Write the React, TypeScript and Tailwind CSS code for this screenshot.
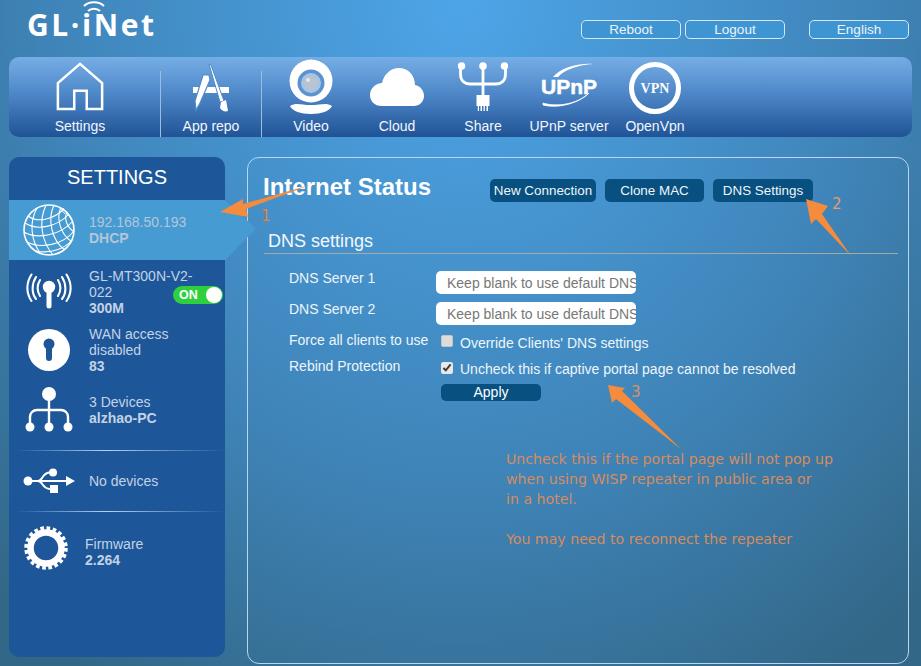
const labelFont = "font-['Liberation_Sans',Arial,sans-serif]";

function HouseIcon() {
  return (
    <svg width="50" height="50" viewBox="0 0 52 52" fill="none" stroke="#fff" strokeWidth="2.6" strokeLinejoin="miter">
      <path d="M26 2 L3 22 L3 49 L20 49 L20 30 L33 30 L33 49 L49 49 L49 22 Z" />
    </svg>
  );
}

function AppRepoIcon() {
  return (
    <svg width="42" height="50" viewBox="0 0 42 50" fill="#fff">
      <path d="M3 25 H39 V31 H3 Z" />
      <path d="M13 13 L19 13 L20 18 L10 41 L6 48 L5 39 Z" stroke="#5089c8" strokeWidth="1.2" />
      <path d="M19 2 L21 3 L34 39 L30 40 Z" stroke="#5089c8" strokeWidth="1" />
      <path d="M31 40 L36 38 L38 49 C35 50 32 49 30 46 Z" />
    </svg>
  );
}

function WebcamIcon() {
  return (
    <svg width="46" height="56" viewBox="0 0 46 56">
      <circle cx="23" cy="22" r="21.5" fill="#fff" />
      <circle cx="23" cy="24" r="13.5" fill="#5b93d2" />
      <circle cx="23" cy="24" r="10" fill="#a9c4e2" />
      <circle cx="23" cy="24" r="6.5" fill="#b9c4cf" />
      <circle cx="20" cy="21" r="2" fill="#e3e9ef" />
      <path d="M2 47 C8 43 13 46 23 46 C33 46 38 43 44 47 C42 52 33 55 23 55 C13 55 4 52 2 47 Z" fill="#fff" />
    </svg>
  );
}

function CloudIcon() {
  return (
    <svg width="54" height="40" viewBox="0 0 54 40" fill="#fff">
      <path d="M12 39 C4 39 0 34 0 28 C0 21 6 16 12 16 C14 7 21 1 29 1 C38 1 45 8 45 18 C50 19 54 23 54 29 C54 35 49 39 44 39 Z" />
    </svg>
  );
}

function ShareIcon() {
  return (
    <svg width="50" height="50" viewBox="0 0 50 50">
      <g fill="none" stroke="#fff" strokeWidth="2.8">
        <path d="M25 4 V34" />
        <path d="M2.5 4 V12 C2.5 19 7 22 12 22 H38 C43 22 47.5 19 47.5 12 V4" />
      </g>
      <g fill="#fff">
        <circle cx="3.5" cy="4" r="3.8" />
        <circle cx="25" cy="4" r="3.8" />
        <circle cx="46.5" cy="4" r="3.8" />
        <path d="M18.5 33 H31.5 V44 H30 V49 H28.5 V44 H26.8 V49 H25.5 V44 H24 V49 H22.5 V44 H21 V49 H19.8 V44 H18.5 Z" />
      </g>
    </svg>
  );
}

function UpnpIcon() {
  return (
    <svg width="56" height="46" viewBox="0 0 56 46">
      <path d="M12 14 C20 5 36 0 52 1 C38 2 24 6 17 14 Z" fill="#fff" />
      <path d="M2 40 C14 44 36 42 48 30 C38 40 18 46 2 42 Z" fill="#fff" stroke="#fff" strokeWidth="0.8" />
      <text x="28" y="31" textAnchor="middle" fill="#fff" stroke="#fff" strokeWidth="0.5" fontFamily="'Liberation Sans',Arial,sans-serif" fontWeight="700" fontSize="21">UPnP</text>
    </svg>
  );
}

function VpnIcon() {
  return (
    <svg width="54" height="54" viewBox="0 0 54 54">
      <circle cx="27" cy="27" r="23.5" fill="none" stroke="#fff" strokeWidth="5" />
      <text x="27" y="32" textAnchor="middle" fill="#fff" fontFamily="'Liberation Serif',serif" fontWeight="700" fontSize="14">VPN</text>
    </svg>
  );
}

function GlobeIcon() {
  return (
    <svg width="52" height="52" viewBox="0 0 52 52" fill="none" stroke="#fff" strokeWidth="1.1">
      <circle cx="26" cy="26" r="25" strokeWidth="1.6" />
      <path d="M5 12 C14 19 30 16 41 5" />
      <path d="M2 19 C14 27 34 23 46 10" />
      <path d="M1 28 C14 36 38 31 50 17" />
      <path d="M4 38 C18 45 40 41 51 27" />
      <path d="M13 47 C26 50 42 45 49 36" />
      <path d="M14 4 C6 18 8 36 17 49" />
      <path d="M23 1 C15 18 19 38 30 51" />
      <path d="M31 1 C24 16 29 37 42 46" />
      <path d="M38 3 C33 14 37 30 49 38" />
      <path d="M44 8 C41 14 43 22 51 28" />
      <path d="M36 3 L42 10 M40 4 L46 12 M43 7 L48 15" strokeWidth="0.9" />
    </svg>
  );
}

function WirelessIcon() {
  return (
    <svg width="46" height="36" viewBox="0 0 46 36" fill="none" stroke="#fff" strokeWidth="2.1" strokeLinecap="round">
      <circle cx="23" cy="14" r="6.2" fill="#fff" stroke="none" />
      <path d="M23 16 V33" strokeWidth="5" />
      <path d="M14 7 C11 12 11 18 14 23" />
      <path d="M10 4 C5.5 11 5.5 20 10 26" />
      <path d="M5.5 1.5 C0 10 0 20 5.5 28" />
      <path d="M32 7 C35 12 35 18 32 23" />
      <path d="M36 4 C40.5 11 40.5 20 36 26" />
      <path d="M40.5 1.5 C46 10 46 20 40.5 28" />
    </svg>
  );
}

function KeyholeIcon() {
  return (
    <svg width="42" height="42" viewBox="0 0 42 42">
      <circle cx="21" cy="21" r="21" fill="#fff" />
      <circle cx="21" cy="15" r="5.5" fill="#1d5799" />
      <rect x="18" y="15" width="6" height="17" rx="3" fill="#1d5799" />
    </svg>
  );
}

function TreeIcon() {
  return (
    <svg width="48" height="46" viewBox="0 0 48 46">
      <g fill="none" stroke="#fff" strokeWidth="2.4">
        <path d="M24 8 V38" />
        <path d="M5 38 V30 C5 26 8 23 12 23 H36 C40 23 43 26 43 30 V38" />
      </g>
      <g fill="#fff">
        <circle cx="24" cy="7" r="7" />
        <circle cx="5" cy="40" r="4.5" />
        <circle cx="24" cy="40" r="4.5" />
        <circle cx="43" cy="40" r="4.5" />
      </g>
    </svg>
  );
}

function UsbIcon() {
  return (
    <svg width="52" height="26" viewBox="0 0 52 26" fill="#fff">
      <circle cx="5" cy="13" r="4.5" />
      <path d="M5 12 H43 V14 H5 Z" />
      <path d="M43 8 L52 13 L43 18 Z" />
      <circle cx="30" cy="4.5" r="4" />
      <rect x="27" y="17" width="8" height="8" />
      <path d="M15 13 C20 13 19 4.5 27 4.5 M15 13 C20 13 19 21 27 21" fill="none" stroke="#fff" strokeWidth="2" />
    </svg>
  );
}

function GearIcon() {
  return (
    <svg width="44" height="44" viewBox="0 0 44 44" fill="none" stroke="#fff">
      <circle cx="22" cy="22" r="15.5" strokeWidth="6.5" />
      <circle cx="22" cy="22" r="19.5" strokeWidth="4.5" strokeDasharray="3.6 2.52" />
    </svg>
  );
}

function NavItem({ label, children, width = "w-[86px]" }: { label: string; children: React.ReactNode; width?: string }) {
  return (
    <div className={`${width} h-full flex flex-col items-center shrink-0`}>
      <div className="h-[60px] flex items-end justify-center">{children}</div>
      <span className="text-[14px] leading-4 text-[#f1f6fc] mt-[1px] whitespace-nowrap">{label}</span>
    </div>
  );
}

function TopButton({ label, className = "" }: { label: string; className?: string }) {
  return (
    <button className={`w-[100px] h-[19px] rounded-[5px] border border-[#d3e9f8] bg-[#3f95d1] text-[13.5px] leading-[17px] text-[#eaf4fb] ${className}`}>
      {label}
    </button>
  );
}

function TabButton({ label, width }: { label: string; width: string }) {
  return (
    <button className={`${width} h-[23px] rounded-[5px] bg-[#07507f] text-[13.4px] leading-[23px] text-[#eef5fa]`}>
      {label}
    </button>
  );
}

function SideRule() {
  return <div className="h-px bg-[linear-gradient(to_right,transparent_3%,#b5d2f2_45%,transparent_100%)]" />;
}

function Annotations() {
  return (
    <svg className="absolute inset-0 pointer-events-none" width="921" height="666" viewBox="0 0 921 666">
      <g fill="#f58b3c">
        <path d="M220 212 L243 199 L243 204 L310 185 L246 209 L248 217 Z" />
        <path d="M806 199 L828 206 L822 214 L851 256 L816 219 L811 224 Z" />
        <path d="M608 385 L625 388 L622 391 L681 449 L616 399 L612 403 Z" />
      </g>
    </svg>
  );
}

export default function App() {
  return (
    <div className={`relative w-[921px] h-[666px] overflow-hidden ${labelFont} bg-[radial-gradient(ellipse_75%_120%_at_50%_0%,#4da5e8_0%,#3f84b8_60%,#326787_100%)]`}>
      {/* top bar */}
      <header className="h-[57px] flex justify-between">
        <div className="relative ml-[27px] pt-[7px]">
          <span className="font-['Open_Sans',sans-serif] font-bold text-[30px] leading-[36px] tracking-[2.6px] text-white whitespace-nowrap">
            GL·iNet
          </span>
          <svg className="absolute left-[56px] top-[1px]" width="22" height="13" viewBox="0 0 22 13" fill="none" stroke="#fff" strokeWidth="2">
            <path d="M1 5 C6 0 16 0 21 5" />
            <path d="M5 10 C8 7 14 7 17 10" />
          </svg>
        </div>
        <div className="flex pt-[20px] pr-[12px]">
          <TopButton label="Reboot" />
          <TopButton label="Logout" className="ml-[4px]" />
          <TopButton label="English" className="ml-[24px]" />
        </div>
      </header>

      {/* app nav */}
      <nav className="mx-[9px] h-[80px] rounded-[10px] flex bg-[linear-gradient(to_bottom,#75aee5_0%,#4f88c8_45%,#1f5396_100%)]">
        <NavItem label="Settings" width="w-[142px]"><div className="pb-[5px]"><HouseIcon /></div></NavItem>
        <div className="w-px mt-[14px] bg-[#9dbde0] ml-[9px] shrink-0" />
        <NavItem label="App repo" width="w-[100px]"><div className="pb-[5px]"><AppRepoIcon /></div></NavItem>
        <div className="w-px mt-[14px] bg-[#9dbde0] shrink-0" />
        <div className="ml-[6px] flex">
          <NavItem label="Video"><div className="pb-[2px]"><WebcamIcon /></div></NavItem>
          <NavItem label="Cloud"><div className="pb-[10px]"><CloudIcon /></div></NavItem>
          <NavItem label="Share"><div className="pb-[5px]"><ShareIcon /></div></NavItem>
          <NavItem label="UPnP server"><div className="pb-[8px]"><UpnpIcon /></div></NavItem>
          <NavItem label="OpenVpn"><div className="pb-[2px]"><VpnIcon /></div></NavItem>
        </div>
      </nav>

      <div className="flex mt-[20px] ml-[9px]">
        {/* sidebar */}
        <aside className="w-[216px] h-[500px] rounded-[10px] bg-[#1d5799] shrink-0 text-[14px] leading-4 text-[#c3d2e6]">
          <h2 className="h-[43px] text-center text-[20px] leading-[41px] text-white">SETTINGS</h2>

          <div className="relative h-[60px] bg-[#469bd2] flex items-center text-[#b4c6d8]">
            <div className="absolute left-[216px] top-0 w-[31px] h-[60px] bg-[#469bd2] [clip-path:polygon(0_0,100%_48%,0_100%)]" />
            <div className="w-[80px] pl-[14px] shrink-0 flex"><GlobeIcon /></div>
            <div>
              <div>192.168.50.193</div>
              <div className="font-bold">DHCP</div>
            </div>
          </div>

          <div className="h-[62px] flex items-center">
            <div className="w-[80px] pl-[17px] shrink-0 flex"><WirelessIcon /></div>
            <div className="w-[84px] shrink-0 pt-[1px]">
              <div className="whitespace-nowrap">GL-MT300N-V2-</div>
              <div>022</div>
              <div className="font-bold">300M</div>
            </div>
            <div className="relative mt-[8px] w-[50px] h-[18px] rounded-full bg-[#2ed03f] shrink-0">
              <span className="absolute left-[6px] top-[1px] text-[12.5px] font-bold text-white">ON</span>
              <span className="absolute right-[1px] top-[1px] w-[16px] h-[16px] rounded-full bg-white" />
            </div>
          </div>

          <div className="h-[56px] flex items-center">
            <div className="w-[80px] pl-[19px] shrink-0 flex"><KeyholeIcon /></div>
            <div className="w-[112px]">
              <div>WAN access disabled</div>
              <div className="font-bold">83</div>
            </div>
          </div>

          <div className="h-[72px] pb-[8px] flex items-center">
            <div className="w-[80px] pl-[16px] shrink-0 flex"><TreeIcon /></div>
            <div>
              <div>3 Devices</div>
              <div className="font-bold">alzhao-PC</div>
            </div>
          </div>
          <SideRule />

          <div className="h-[60px] flex items-center">
            <div className="w-[80px] pl-[14px] shrink-0 flex"><UsbIcon /></div>
            <div>No devices</div>
          </div>
          <SideRule />

          <div className="flex items-center pt-[14px]">
            <div className="w-[76px] pl-[15px] pb-[8px] shrink-0 flex"><GearIcon /></div>
            <div>
              <div>Firmware</div>
              <div className="font-bold">2.264</div>
            </div>
          </div>
        </aside>

        {/* main panel */}
        <main className="ml-[22px] w-[662px] h-[507px] rounded-[12px] border border-[#b9d5f0] shrink-0 pl-[15px] text-[14px] text-[#eef5fb]">
          <div className="flex items-start h-[45px]">
            <h1 className="w-[227px] mt-[15px] text-[24px] leading-7 font-bold text-white">Internet Status</h1>
            <div className="flex gap-[9px] mt-[21px]">
              <TabButton label="New Connection" width="w-[106px]" />
              <TabButton label="Clone MAC" width="w-[99px]" />
              <TabButton label="DNS Settings" width="w-[100px]" />
            </div>
          </div>

          <h3 className="mt-[25px] ml-[1px] mr-[10px] h-[26px] border-b border-[#a6a9a4] pl-[4px] text-[18px] leading-[27px] text-[#f4f8fc]">
            DNS settings
          </h3>

          <div className="pl-[26px] pt-[17px]">
            <div className="flex h-[31px]">
              <label className="w-[147px] leading-4 -mt-px">DNS Server 1</label>
              <input className="w-[200px] h-[23px] rounded-[5px] bg-white pl-[11px] pr-0 text-[14px] placeholder:text-[#777]" placeholder="Keep blank to use default DNS server" />
            </div>
            <div className="flex h-[31px]">
              <label className="w-[147px] leading-4 -mt-px">DNS Server 2</label>
              <input className="w-[200px] h-[23px] rounded-[5px] bg-white pl-[11px] pr-0 text-[14px] placeholder:text-[#777]" placeholder="Keep blank to use default DNS server" />
            </div>
            <div className="flex h-[26px]">
              <label className="w-[152px] leading-4 -mt-px whitespace-nowrap">Force all clients to use</label>
              <input type="checkbox" className="appearance-none w-[12px] h-[12px] mt-[2px] shrink-0 rounded-[2px] bg-[#dcdcdc] border border-[#c4c4c4]" />
              <span className="ml-[7px] pt-[2px] leading-4">Override Clients' DNS settings</span>
            </div>
            <div className="flex h-[22px]">
              <label className="w-[152px] leading-4 -mt-px">Rebind Protection</label>
              <input type="checkbox" defaultChecked className="w-[12px] h-[12px] mt-[3px] shrink-0 accent-[#e8e8e8]" />
              <span className="ml-[7px] pt-[2px] leading-4 whitespace-nowrap">Uncheck this if captive portal page cannot be resolved</span>
            </div>
            <button className="mt-[3px] ml-[152px] w-[100px] h-[17px] rounded-[5px] bg-[#07507f] text-[14px] leading-[17px] text-white">Apply</button>
          </div>
        </main>
      </div>

      {/* orange notes drawn over the screenshot */}
      <Annotations />
      <span className="absolute left-[261px] top-[207px] font-['DejaVu_Sans',sans-serif] text-[15px] leading-[18px] text-[#e8803c]">1</span>
      <span className="absolute left-[832px] top-[195px] font-['DejaVu_Sans',sans-serif] text-[15px] leading-[18px] text-[#e89a70]">2</span>
      <span className="absolute left-[631px] top-[383px] font-['DejaVu_Sans',sans-serif] text-[15px] leading-[18px] text-[#d9925f]">3</span>
      <div className="absolute left-[506px] top-[449px] font-['DejaVu_Sans',sans-serif] text-[14.15px] leading-5 text-[#d58c5e] whitespace-nowrap">
        <div>Uncheck this if the portal page will not pop up</div>
        <div>when using WISP repeater in public area or</div>
        <div>in a hotel.</div>
        <div className="mt-5">You may need to reconnect the repeater</div>
      </div>
    </div>
  );
}
